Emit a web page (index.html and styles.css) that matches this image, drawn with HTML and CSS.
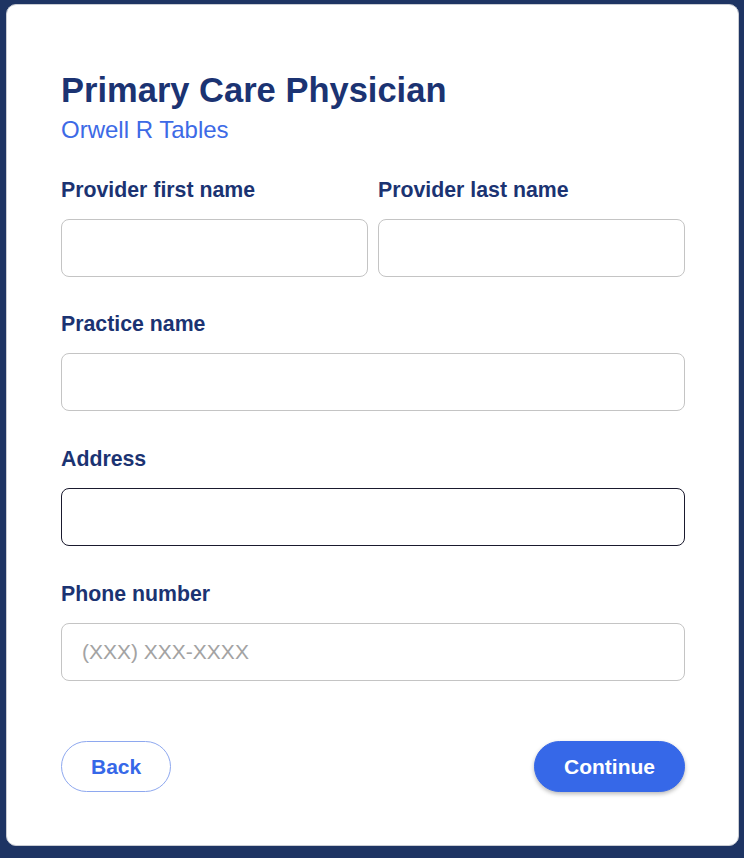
FILE: index.html
```html
<!DOCTYPE html>
<html lang="en">
<head>
<meta charset="utf-8">
<title>Primary Care Physician</title>
<link rel="stylesheet" href="styles.css">
</head>
<body>
<div class="card">
  <header class="head">
    <h1 class="title">Primary Care Physician</h1>
    <p class="subtitle">Orwell R Tables</p>
  </header>
  <form class="form">
    <div class="row two">
      <label class="field">
        <span class="label">Provider first name</span>
        <input class="input" type="text">
      </label>
      <label class="field">
        <span class="label">Provider last name</span>
        <input class="input" type="text">
      </label>
    </div>
    <label class="field row">
      <span class="label">Practice name</span>
      <input class="input" type="text">
    </label>
    <label class="field row">
      <span class="label">Address</span>
      <input class="input focused" type="text">
    </label>
    <label class="field row">
      <span class="label">Phone number</span>
      <input class="input" type="text" placeholder="(XXX) XXX-XXXX">
    </label>
    <div class="actions">
      <button type="button" class="btn btn-back">Back</button>
      <button type="button" class="btn btn-continue">Continue</button>
    </div>
  </form>
</div>
</body>
</html>
```
FILE: styles.css
```css
* { box-sizing: border-box; }
html, body { margin: 0; padding: 0; }
body {
  background: #1e3463;
  font-family: "Liberation Sans", Arial, Helvetica, sans-serif;
  width: 744px;
  height: 858px;
  overflow: hidden;
}
.card {
  margin: 4px 0 0 6px;
  width: 733px;
  height: 842px;
  background: #ffffff;
  border: 1px solid #c9ccd3;
  border-radius: 10px;
  padding: 65px 53px 53px 54px;
}
.head { margin: 0; }
.title {
  margin: 0;
  font-size: 34.5px;
  line-height: 40px;
  font-weight: 700;
  color: #1b3372;
}
.subtitle {
  margin: 6px 0 0;
  font-size: 24px;
  line-height: 28px;
  color: #3d6ae6;
}
.form {
  margin-top: 34px;
  display: flex;
  flex-direction: column;
}
.row { margin-bottom: 36px; }
.two {
  display: grid;
  grid-template-columns: 1fr 1fr;
  column-gap: 10px;
  margin-bottom: 35px;
}
.field { display: flex; flex-direction: column; }
.label {
  font-size: 21.3px;
  line-height: 24px;
  font-weight: 700;
  color: #1b3372;
  margin-bottom: 17px;
}
.input {
  width: 100%;
  height: 58px;
  border: 1px solid #c4c4c4;
  border-radius: 8px;
  padding: 0 20px;
  font-family: "Liberation Sans", Arial, sans-serif;
  font-size: 21px;
  color: #222;
  background: #fff;
  outline: none;
}
.input::placeholder { color: #a3a3a3; }
.input.focused { border-color: #1a1a2e; }
.actions {
  margin-top: 24px;
  display: flex;
  justify-content: space-between;
  align-items: center;
}
.btn {
  height: 51px;
  border-radius: 26px;
  padding: 0 29px;
  font-family: "Liberation Sans", Arial, sans-serif;
  font-size: 21px;
  font-weight: 700;
  cursor: pointer;
}
.btn-back {
  background: #fff;
  color: #3668e8;
  border: 1px solid #8ea8ef;
}
.btn-continue {
  background: #3668e8;
  color: #fff;
  border: 1px solid #3668e8;
  box-shadow: 0 2px 4px rgba(0, 0, 0, 0.28);
}
```
